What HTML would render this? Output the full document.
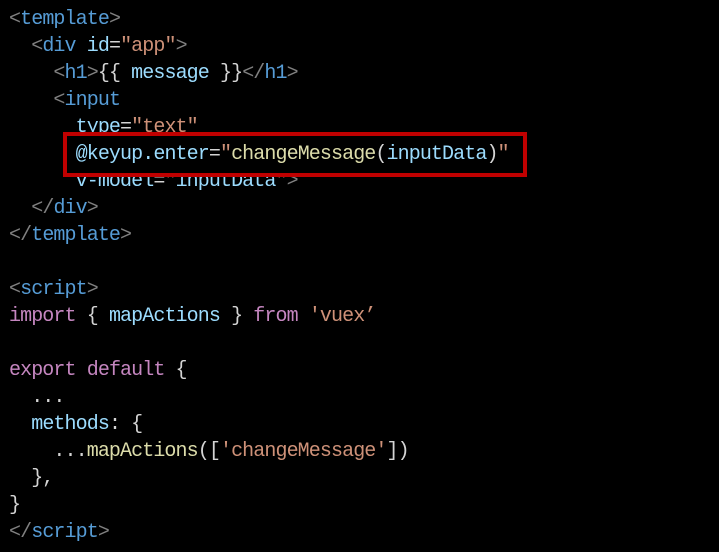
<!DOCTYPE html>
<html><head><meta charset="utf-8"><style>
html,body{margin:0;padding:0;background:#000;width:719px;height:552px;overflow:hidden}
pre{margin:0;position:absolute;left:9px;top:6px;font-family:"Liberation Mono",monospace;font-size:20px;letter-spacing:-0.9px;line-height:27px;color:#d4d4d4;}
.l{position:relative;display:block;height:27px;white-space:pre}
.g{color:#808080}.t{color:#569cd6}.a{color:#9cdcfe}.s{color:#ce9178}.k{color:#c586c0}.f{color:#dcdcaa}
#box{position:absolute;left:63px;top:132px;width:456px;height:37px;border:4px solid #c00000;background:#000;z-index:1}
.top{z-index:2}
</style></head><body>
<div id="box"></div>
<pre><span class="l"><span class="g">&lt;</span><span class="t">template</span><span class="g">&gt;</span></span><span class="l">  <span class="g">&lt;</span><span class="t">div</span> <span class="a">id</span>=<span class="s">"app"</span><span class="g">&gt;</span></span><span class="l">    <span class="g">&lt;</span><span class="t">h1</span><span class="g">&gt;</span>{{ <span class="a">message</span> }}<span class="g">&lt;/</span><span class="t">h1</span><span class="g">&gt;</span></span><span class="l">    <span class="g">&lt;</span><span class="t">input</span></span><span class="l">      <span class="a">type</span>=<span class="s">"text"</span></span><span class="l top">      <span class="a">@keyup.enter</span>=<span class="s">"</span><span class="f">changeMessage</span>(<span class="a">inputData</span>)<span class="s">"</span></span><span class="l">      <span class="a">v-model</span>=<span class="s">"</span><span class="a">inputData</span><span class="s">"</span><span class="g">&gt;</span></span><span class="l">  <span class="g">&lt;/</span><span class="t">div</span><span class="g">&gt;</span></span><span class="l"><span class="g">&lt;/</span><span class="t">template</span><span class="g">&gt;</span></span><span class="l"> </span><span class="l"><span class="g">&lt;</span><span class="t">script</span><span class="g">&gt;</span></span><span class="l"><span class="k">import</span> { <span class="a">mapActions</span> } <span class="k">from</span> <span class="s">'vuex’</span></span><span class="l"> </span><span class="l"><span class="k">export</span> <span class="k">default</span> {</span><span class="l">  ...</span><span class="l">  <span class="a">methods</span>: {</span><span class="l">    ...<span class="f">mapActions</span>([<span class="s">'changeMessage'</span>])</span><span class="l">  },</span><span class="l">}</span><span class="l"><span class="g">&lt;/</span><span class="t">script</span><span class="g">&gt;</span></span></pre>
</body></html>
